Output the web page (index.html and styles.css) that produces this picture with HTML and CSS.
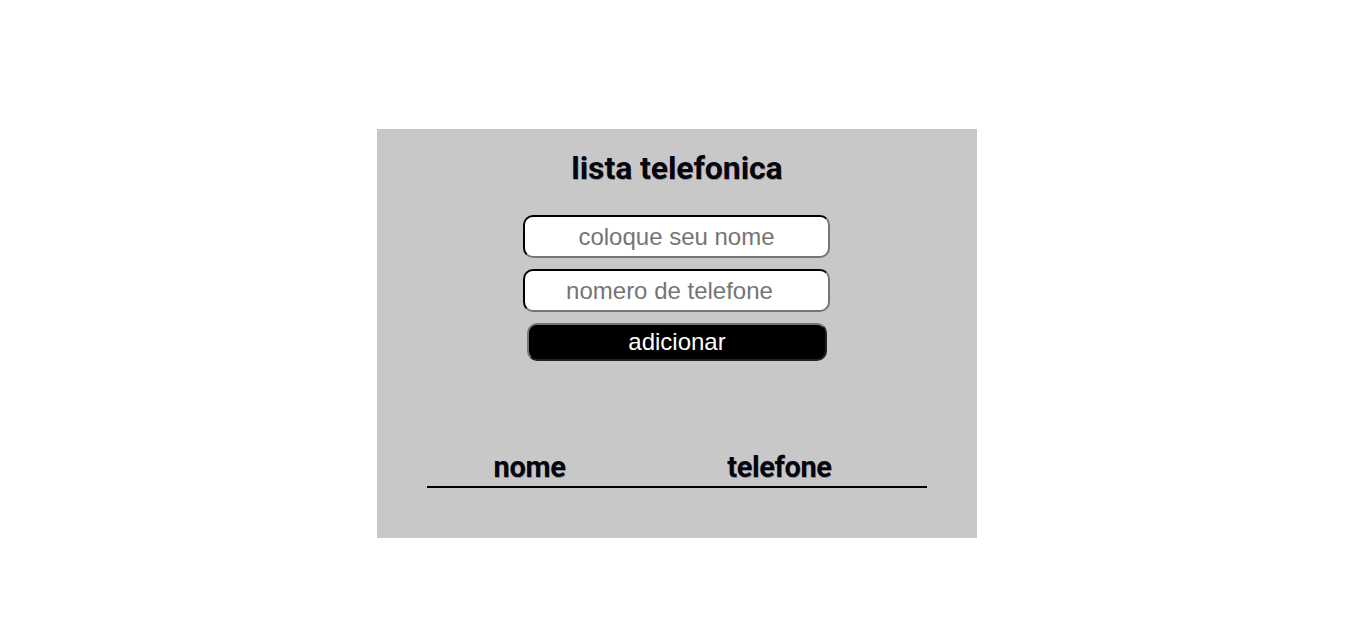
FILE: index.html
```html
<!DOCTYPE html>
<html lang="pt-br">
<head>
  <meta charset="UTF-8" />
  <meta name="viewport" content="width=device-width, initial-scale=1.0" />
  <title>Lista telefonica</title>
  <link rel="stylesheet" href="styles.css">
</head>
<body>
  <div class="container">
    <h1>lista telefonica</h1>
    <form class="form" id="form">
      <input type="text" placeholder="coloque seu nome" id="nome" />
      <input type="text" placeholder="nomero de telefone" id="telefone" class="telefone" />
      <button type="submit">adicionar</button>
    </form>
    <table>
      <thead>
        <tr>
          <th class="col-nome">nome</th>
          <th class="col-tel">telefone</th>
        </tr>
      </thead>
      <tbody id="lista"></tbody>
    </table>
  </div>
</body>
</html>
```

FILE: styles.css
```css
* {
  box-sizing: border-box;
}
body {
  margin: 0;
  padding-right: 2px;
  font-family: 'Liberation Sans', Arial, sans-serif;
  background: #fff;
}
.container {
  width: 600px;
  height: 409px;
  margin: 129px auto 0;
  padding-top: 20px;
  background: #c8c8c8;
  text-align: center;
}
h1 {
  font-family: Roboto, sans-serif;
  font-size: 32px;
  font-weight: 700;
  letter-spacing: -0.1px;
  color: #05050f;
  text-shadow: 0.5px 0.5px 0.5px rgba(0, 0, 0, 0.3);
  margin: 0 0 28px;
}
.form {
  display: flex;
  flex-direction: column;
  align-items: center;
  gap: 11px;
}
input {
  width: 307px;
  height: 43px;
  margin-right: 1px;
  border: 2px inset #767676;
  border-color: #1a1a1a #767676 #767676 #1a1a1a;
  border-radius: 10px;
  background: #fff;
  font-family: 'Liberation Sans', Arial, sans-serif;
  font-size: 24px;
  text-align: center;
}
.telefone {
  padding-right: 16px;
}
input::placeholder {
  color: #757575;
}
button {
  width: 300px;
  height: 38px;
  background: #000;
  color: #fff;
  border: 2px outset #767676;
  border-radius: 10px;
  font-family: 'Liberation Sans', Arial, sans-serif;
  font-size: 24px;
  padding: 0;
}
table {
  width: 500px;
  margin: 89px auto 0;
  border-collapse: collapse;
}
th {
  font-family: Roboto, sans-serif;
  font-size: 29px;
  font-weight: 700;
  letter-spacing: -0.4px;
  color: #05050f;
  text-shadow: 0.5px 0.5px 0.5px rgba(0, 0, 0, 0.3);
  padding: 0 0 2px;
  border-bottom: 2px solid #000;
}
.col-nome {
  width: 205px;
}
.col-tel {
  width: 295px;
}
```
